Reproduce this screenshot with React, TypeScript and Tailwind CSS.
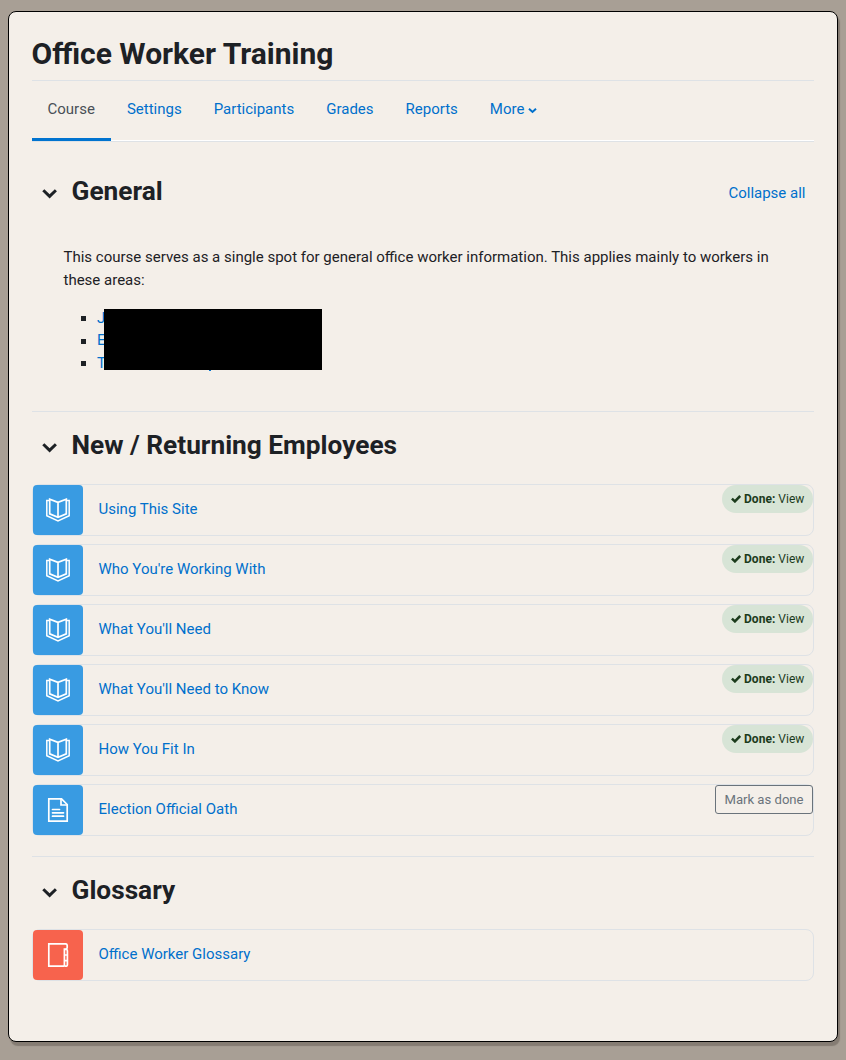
import React from "react";

const link = "text-[#0070cc]";

function Chevron({ className }: { className: string }) {
  return (
    <svg viewBox="0 0 16 11" className={className} fill="none" stroke="currentColor" strokeWidth="3">
      <path d="M1.3 2.2 L7.6 8.4 L13.9 2.2" />
    </svg>
  );
}

function SmallChevron() {
  return (
    <svg viewBox="0 0 9 7" className="mt-[9px] ml-1 h-[7px] w-[9px]" fill="none" stroke="currentColor" strokeWidth="2">
      <path d="M1 1.7 L4.5 4.9 L8 1.7" />
    </svg>
  );
}

function BookIcon() {
  return (
    <svg viewBox="0 0 24 24" className="size-6" fill="none" stroke="#fff" strokeWidth="1.7" strokeLinejoin="miter">
      <path d="M12 4.4 L3.7 1.2 V15.9 L12 19.4 L20.3 15.9 V1.2 Z M12 4.4 V19.4" />
      <path d="M3.6 2.4 H0.8 V17.8 L12 23 L23.2 17.8 V2.4 H20.4" strokeWidth="1.5" />
    </svg>
  );
}

function PageIcon() {
  return (
    <svg viewBox="0 0 24 24" className="size-6" fill="none" stroke="#fff" strokeWidth="1.7">
      <path d="M2.8 0.8 H15.5 L21.2 6.5 V23.2 H2.8 Z" />
      <path d="M15 0.8 V7 H21.2" />
      <path d="M6.5 11.5 H13.5 M6.5 14.8 H17.5 M6.5 18.2 H17.5" strokeLinecap="round" />
    </svg>
  );
}

function GlossaryIcon() {
  return (
    <svg viewBox="0 0 24 24" className="size-6" fill="none" stroke="#fff" strokeWidth="1.7">
      <path d="M18.4 23.2 H2.8 V0.8 H19.4 Q21.2 0.8 21.2 2.6 V4.6 Q21.2 6 19.8 6 H18.4 V23.2" />
      <path d="M18.4 6.5 H20.2 Q21.4 6.5 21.4 7.8 V21.8 Q21.4 23.2 20 23.2 H18.4" />
      <path d="M18.4 12 H21.4 M18.4 17.6 H21.4" />
    </svg>
  );
}

function Check() {
  return (
    <svg viewBox="0 0 10 8" className="mr-[2.5px] ml-[0.5px] h-2 w-[10px]" fill="none" stroke="currentColor" strokeWidth="2.5">
      <path d="M0.9 3.6 L3.9 6.4 L9.2 1" />
    </svg>
  );
}

function SectionTitle({ children, action }: { children: React.ReactNode; action?: React.ReactNode }) {
  return (
    <div className="flex h-9 items-center">
      <div className="flex w-[39.5px] pl-[10px] pt-[5px]">
        <Chevron className="h-[11px] w-4" />
      </div>
      <h3 className="flex-1 text-[26.25px] leading-8 font-bold">{children}</h3>
      {action}
    </div>
  );
}

type Item = { name: string; kind: "book" | "page" | "glossary"; status?: "done" | "todo" };

function Activity({ name, kind, status }: Item) {
  return (
    <div className="flex h-[52px] rounded-lg border border-[#dee2e6]">
      <div
        className={`flex size-[50px] items-center justify-center rounded ${
          kind === "glossary" ? "bg-[#f7634d]" : "bg-[#399be2]"
        }`}
      >
        {kind === "book" ? <BookIcon /> : kind === "page" ? <PageIcon /> : <GlossaryIcon />}
      </div>
      <a className={`flex-1 pt-[13px] pl-[15.5px] ${link}`}>{name}</a>
      {status === "done" && (
        <div className="flex h-7 w-[91px] items-center rounded-full bg-[#d7e4d6] pl-2 text-[12px] text-[#1c3b1c]">
          <Check />
          <span className="pl-px tracking-[0.03px] whitespace-nowrap">
            <strong className="font-bold">Done:</strong> View
          </span>
        </div>
      )}
      {status === "todo" && (
        <button className="flex h-[29px] w-[98px] items-center justify-center rounded-[3px] border border-[#6a737b] pt-px text-[13.125px] text-[#6a737b]">
          Mark as done
        </button>
      )}
    </div>
  );
}

const items: Item[] = [
  { name: "Using This Site", kind: "book", status: "done" },
  { name: "Who You're Working With", kind: "book", status: "done" },
  { name: "What You'll Need", kind: "book", status: "done" },
  { name: "What You'll Need to Know", kind: "book", status: "done" },
  { name: "How You Fit In", kind: "book", status: "done" },
  { name: "Election Official Oath", kind: "page", status: "todo" },
];

export default function App() {
  return (
    <div className="h-[1060px] bg-[#a89f95] pt-[11px] pl-2 font-['Roboto',sans-serif] text-[15px] leading-[22.5px] text-[#1d2125]">
      <main className="h-[1031px] w-[830px] rounded-[8px] border border-black bg-[#f4efe9] px-[23px] shadow-[2px_4px_1px_#857c73]">
        <h1 className="flex h-[69px] items-center border-b border-[#dee2e6] pt-4 text-[30px] leading-9 font-bold">
          <span className="-ml-[0.5px]">Office Worker Training</span>
        </h1>
        <nav className="flex h-[61px] border-b border-[#dee2e6]">
          <div className="flex flex-1 border-b border-white">
            <a className="-mb-px h-[60px] border-b-[3px] border-[#0073cf] pr-4 pl-[15.5px] pt-[17px] text-[#495057]">
              Course
            </a>
            {["Settings", "Participants", "Grades", "Reports"].map((t) => (
              <a key={t} className={`px-4 pt-[17px] ${link}`}>
                {t}
              </a>
            ))}
            <a className={`flex px-4 pt-[17px] ${link}`}>
              More
              <SmallChevron />
            </a>
          </div>
        </nav>

        <section className="h-[270px] border-b border-[#dee2e6] pt-[31px]">
          <SectionTitle action={<a className={`pt-[5px] pr-[8.5px] ${link}`}>Collapse all</a>}>General</SectionTitle>
          <div className="pr-8 pl-[31.5px] pt-[37px]">
            <p>
              This course serves as a single spot for general office worker information. This applies mainly to workers
              in these areas:
            </p>
            <div className="relative mt-[15px]">
              <ul>
                {["J", "E", "T"].map((t) => (
                  <li key={t} className={`flex h-[22.5px] ${link}`}>
                    <span className="mt-[10px] mr-[11px] ml-[17.5px] size-[5px] bg-[#1d2125]" />
                    <span className="pt-[0.5px]">{t}</span>
                  </li>
                ))}
              </ul>
              <div className="absolute top-[3px] left-[40.5px] h-[61px] w-[218px] bg-black" />
              <div className="absolute top-16 left-[145.5px] h-px w-0.5 bg-[#0073cf]" />
            </div>
          </div>
        </section>

        <section className="h-[445px] border-b border-[#dee2e6] pt-[15px]">
          <SectionTitle>New / Returning Employees</SectionTitle>
          <div className="flex flex-col gap-2 pt-[21px]">
            {items.map((item) => (
              <Activity key={item.name} {...item} />
            ))}
          </div>
        </section>

        <section className="pt-[15px]">
          <SectionTitle>Glossary</SectionTitle>
          <div className="pt-[21px]">
            <Activity name="Office Worker Glossary" kind="glossary" />
          </div>
        </section>
      </main>
    </div>
  );
}
